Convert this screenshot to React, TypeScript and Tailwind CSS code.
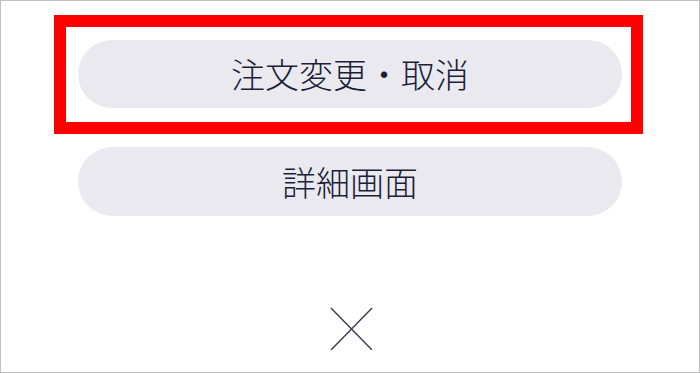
export default function App() {
  return (
    <div
      className="flex h-[373px] w-[700px] flex-col border border-[#c0c0c0] bg-white"
      style={{ fontFamily: '"Noto Sans CJK JP", "Noto Sans", sans-serif' }}
    >
      {/* Highlighted action */}
      <div className="ml-[53px] mt-[14px] w-[589px] border-[12px] border-[#ff0000] pb-[14px] pl-[12px] pr-[9px] pt-[13px]">
        <button className="flex h-[68px] w-[544px] items-center justify-center rounded-full bg-[#e9e9ef] text-[34px] font-light leading-none text-[#1b1e3a]">
          注文変更・取消
        </button>
      </div>

      <button className="ml-[77px] mt-[13px] flex h-[69px] w-[544px] items-center justify-center rounded-full bg-[#e9e9ef] text-[34px] font-light leading-none text-[#1b1e3a]">
        詳細画面
      </button>

      {/* Close */}
      <div className="ml-[328px] mt-[90px] h-[44px] w-[44px]">
        <svg width="44" height="44" viewBox="0 0 44 44" fill="none">
          <path d="M2 2L43 44M43 2L2 44" stroke="#3a3b4f" strokeWidth="1.4" />
        </svg>
      </div>
    </div>
  );
}
